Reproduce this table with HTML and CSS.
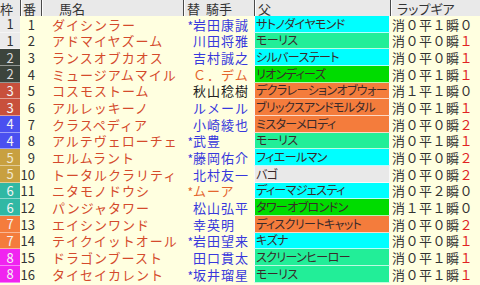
FILE: index.html
```
<!DOCTYPE html>
<html lang="ja">
<head>
<meta charset="utf-8">
<title>出馬表</title>
<link rel="stylesheet" href="styles.css">
</head>
<body>
<div class="table">
  <div class="row">
    <div class="hd h-waku">枠</div>
    <div class="hd h-ban">番</div>
    <div class="hd h-name">馬名</div>
    <div class="hd h-jockey"><span class="h-kae">替</span><span>騎手</span></div>
    <div class="hd h-sire">父</div>
    <div class="hd h-lap">ラップギア</div>
  </div>

  <div class="row">
    <div class="c waku f1">1</div><div class="c ban">1</div><div class="c name">ダイシンラー</div>
    <div class="c mark j-blue"><span>*</span></div><div class="c jockey j-blue">岩田康誠</div>
    <div class="c sire s-cyan">サトノダイヤモンド</div>
    <div class="c lap">消０平１瞬<span>０</span></div>
  </div>
  <div class="row">
    <div class="c waku f1">1</div><div class="c ban">2</div><div class="c name">アドマイヤズーム</div>
    <div class="c mark"></div><div class="c jockey j-blue">川田将雅</div>
    <div class="c sire s-mint">モーリス</div>
    <div class="c lap">消０平０瞬<span class="hot">１</span></div>
  </div>
  <div class="row">
    <div class="c waku f2">2</div><div class="c ban">3</div><div class="c name">ランスオブカオス</div>
    <div class="c mark"></div><div class="c jockey j-blue">吉村誠之</div>
    <div class="c sire s-cyan">シルバーステート</div>
    <div class="c lap">消０平０瞬<span class="hot">１</span></div>
  </div>
  <div class="row">
    <div class="c waku f2">2</div><div class="c ban">4</div><div class="c name">ミュージアムマイル</div>
    <div class="c mark"></div><div class="c jockey j-orange">Ｃ．デム</div>
    <div class="c sire s-green">リオンディーズ</div>
    <div class="c lap">消０平１瞬<span class="hot">１</span></div>
  </div>
  <div class="row">
    <div class="c waku f3">3</div><div class="c ban">5</div><div class="c name">コスモストーム</div>
    <div class="c mark"></div><div class="c jockey j-black">秋山稔樹</div>
    <div class="c sire s-orange">デクラレーションオブウォー</div>
    <div class="c lap">消１平１瞬<span>０</span></div>
  </div>
  <div class="row">
    <div class="c waku f3">3</div><div class="c ban">6</div><div class="c name">アルレッキーノ</div>
    <div class="c mark"></div><div class="c jockey j-blue">ルメール</div>
    <div class="c sire s-orange">ブリックスアンドモルタル</div>
    <div class="c lap">消０平１瞬<span class="hot">１</span></div>
  </div>
  <div class="row">
    <div class="c waku f4">4</div><div class="c ban">7</div><div class="c name">クラスペディア</div>
    <div class="c mark"></div><div class="c jockey j-blue">小崎綾也</div>
    <div class="c sire s-orange">ミスターメロディ</div>
    <div class="c lap">消０平０瞬<span class="hot">２</span></div>
  </div>
  <div class="row">
    <div class="c waku f4">4</div><div class="c ban">8</div><div class="c name">アルテヴェローチェ</div>
    <div class="c mark j-blue"><span>*</span></div><div class="c jockey j-blue">武豊</div>
    <div class="c sire s-mint">モーリス</div>
    <div class="c lap">消０平１瞬<span class="hot">１</span></div>
  </div>
  <div class="row">
    <div class="c waku f5">5</div><div class="c ban">9</div><div class="c name">エルムラント</div>
    <div class="c mark j-blue"><span>*</span></div><div class="c jockey j-blue">藤岡佑介</div>
    <div class="c sire s-cyan">フィエールマン</div>
    <div class="c lap">消０平０瞬<span class="hot">２</span></div>
  </div>
  <div class="row">
    <div class="c waku f5">5</div><div class="c ban">10</div><div class="c name">トータルクラリティ</div>
    <div class="c mark"></div><div class="c jockey j-blue">北村友一</div>
    <div class="c sire s-gray">バゴ</div>
    <div class="c lap">消０平０瞬<span class="hot">２</span></div>
  </div>
  <div class="row">
    <div class="c waku f6">6</div><div class="c ban">11</div><div class="c name">ニタモノドウシ</div>
    <div class="c mark j-orange"><span>*</span></div><div class="c jockey j-orange">ムーア</div>
    <div class="c sire s-cyan">ディーマジェスティ</div>
    <div class="c lap">消０平２瞬<span>０</span></div>
  </div>
  <div class="row">
    <div class="c waku f6">6</div><div class="c ban">12</div><div class="c name">パンジャタワー</div>
    <div class="c mark"></div><div class="c jockey j-blue">松山弘平</div>
    <div class="c sire s-green">タワーオブロンドン</div>
    <div class="c lap">消１平１瞬<span>０</span></div>
  </div>
  <div class="row">
    <div class="c waku f7">7</div><div class="c ban">13</div><div class="c name">エイシンワンド</div>
    <div class="c mark"></div><div class="c jockey j-blue">幸英明</div>
    <div class="c sire s-orange">ディスクリートキャット</div>
    <div class="c lap">消０平０瞬<span class="hot">２</span></div>
  </div>
  <div class="row">
    <div class="c waku f7">7</div><div class="c ban">14</div><div class="c name">テイクイットオール</div>
    <div class="c mark j-blue"><span>*</span></div><div class="c jockey j-blue">岩田望来</div>
    <div class="c sire s-cyan">キズナ</div>
    <div class="c lap">消０平０瞬<span class="hot">１</span></div>
  </div>
  <div class="row">
    <div class="c waku f8">8</div><div class="c ban">15</div><div class="c name">ドラゴンブースト</div>
    <div class="c mark"></div><div class="c jockey j-blue">田口貫太</div>
    <div class="c sire s-mint">スクリーンヒーロー</div>
    <div class="c lap">消０平１瞬<span class="hot">１</span></div>
  </div>
  <div class="row">
    <div class="c waku f8">8</div><div class="c ban">16</div><div class="c name">タイセイカレント</div>
    <div class="c mark j-blue"><span>*</span></div><div class="c jockey j-blue">坂井瑠星</div>
    <div class="c sire s-mint">モーリス</div>
    <div class="c lap">消０平１瞬<span class="hot">１</span></div>
  </div>
</div>
</body>
</html>
```

FILE: styles.css
```
* { box-sizing: border-box; }
html, body { margin: 0; padding: 0; }
body {
  background: #ffffe0;
  font-family: "Noto Sans CJK JP", "Noto Sans", sans-serif;
  font-size: 13px;
  color: #333;
  width: 480px;
  height: 285px;
  overflow: hidden;
}
.table {
  display: grid;
  grid-template-columns: 20px 21px 142px 10px 61px 136px 90px;
  grid-template-rows: 16px repeat(16, 16.67px);
  width: 480px;
}
.row { display: contents; }

/* header */
.hd {
  display: flex;
  align-items: center;
  background: #e9e9e9;
  height: 16px;
  line-height: 1;
  white-space: nowrap;
  color: #333;
  font-size: 13px;
}
.hd + .hd {
  border-left: 1px solid #4a4a4a;
  box-shadow: inset 1px 0 #fcfcfc;
}
.h-waku { padding-left: 0; }
.h-ban { padding-left: 2px; }
.h-name { padding-left: 17px; }
.h-jockey { grid-column: span 2; padding-left: 3px; }
.h-kae { margin-right: 6px; }
.h-sire { padding-left: 3px; }
.h-lap { padding-left: 6px; font-feature-settings: "palt"; }

/* cells */
.c {
  display: flex;
  align-items: center;
  white-space: nowrap;
  line-height: 1;
}
.waku {
  justify-content: center;
  color: #f4f4f4;
  border-bottom: 1px solid rgba(255, 255, 255, 0.45);
}
.f1 { background: #ebebeb; color: #333; }
.f2 { background: #3c443c; color: #d8d8d8; }
.f3 { background: #c8503c; }
.f4 { background: #4a50f0; }
.f5 { background: #c8a040; color: #f0e8d0; }
.f6 { background: #30b8a4; }
.f7 { background: #f47c3c; }
.f8 { background: #f024f0; }

.ban {
  justify-content: flex-end;
  padding-right: 6px;
  color: #333;
}
.name {
  padding-left: 11px;
  letter-spacing: 1px;
  color: #d44a2c;
}
.mark {
  justify-content: flex-end;
  font-size: 12px;
}
.mark span { margin-top: 3px; }
.jockey { letter-spacing: 1px; }
.j-blue { color: #3838dc; }
.j-orange { color: #e4652e; }
.j-black { color: #222; }

.sire {
  padding-left: 1px;
  font-size: 12px;
  letter-spacing: -0.6px;
  font-feature-settings: "palt";
  color: #3a2a2a;
  overflow: hidden;
  border-left: 1px solid #fafafa;
  border-right: 1px solid #fafafa;
  border-bottom: 1px solid rgba(255, 255, 255, 0.7);
}
.s-cyan { background: #00ffff; }
.s-mint { background: #22ee98; }
.s-green { background: #00dc00; }
.s-orange { background: #f47c3c; }
.s-gray { background: #e9e9e9; }

.lap {
  padding-left: 2px;
  letter-spacing: 0.5px;
  color: #333;
}
.lap .hot { color: #e02222; }
```
